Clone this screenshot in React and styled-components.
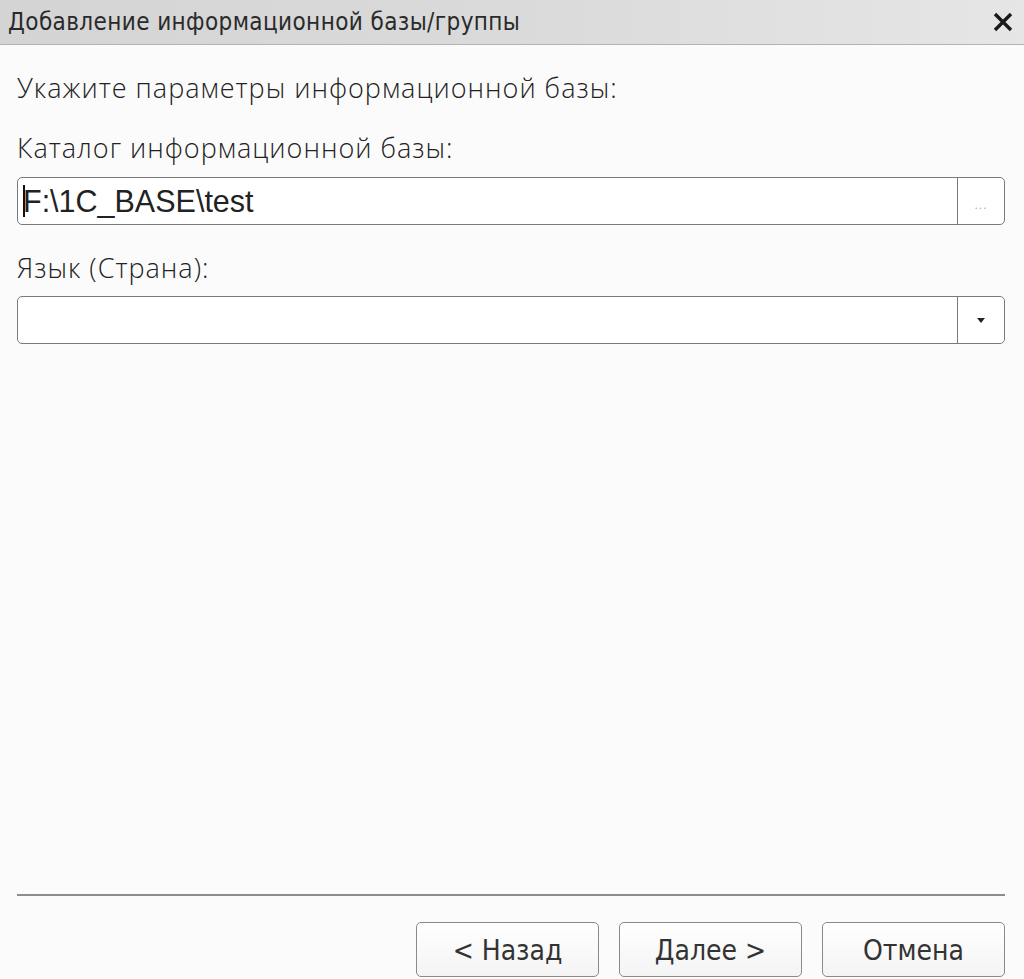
import React from 'react';
import styled, {createGlobalStyle} from 'styled-components';

const GlobalStyle = createGlobalStyle`
    html, body {
        margin: 0;
        padding: 0;
        background: #fbfbfb;
    }
`

const Dialog = styled.div`
    width: 1024px;
    height: 979px;
    display: flex;
    flex-direction: column;
    background: #fbfbfb;
    overflow: hidden;
`

const TitleBar = styled.div`
    height: 44px;
    flex: none;
    display: flex;
    align-items: center;
    justify-content: space-between;
    padding: 0 10px 0 8px;
    background: linear-gradient(to right, #d4d4d4, #dadada 50%, #e6e6e6);
    border-bottom: 1px solid #b4b4b4;
`

const Title = styled.div`
    font-family: "DejaVu Sans Condensed", sans-serif;
    font-size: 24px;
    letter-spacing: 0.4px;
    color: #2a2a2a;
`

const CloseIcon = styled.svg`
    width: 22px;
    height: 22px;
`

const Body = styled.div`
    flex: 1;
    display: flex;
    flex-direction: column;
    padding: 0 19px 0 17px;
`

const Label = styled.div`
    font-family: "Open Sans", sans-serif;
    font-weight: 300;
    font-size: 27px;
    letter-spacing: 1px;
    color: #222;
    line-height: 30px;
    margin-top: ${p => p.top}px;
`

const Field = styled.div`
    margin-top: ${p => p.top}px;
    height: 48px;
    box-sizing: border-box;
    display: flex;
    border: 1px solid #7a7a7a;
    border-radius: 5px;
    background: #fff;
`

const FieldText = styled.div`
    flex: 1;
    display: flex;
    align-items: center;
    padding-left: 5px;
    font-family: "Liberation Sans", Arial, sans-serif;
    font-size: 30.5px;
    color: #222;
`

const Caret = styled.span`
    display: inline-block;
    width: 2px;
    height: 32px;
    background: #111;
    margin-right: -2px;
`

const FieldButton = styled.div`
    width: 47px;
    flex: none;
    border-left: 1px solid #7a7a7a;
    display: flex;
    align-items: center;
    justify-content: center;
    font-family: "Liberation Sans", sans-serif;
    font-size: 12px;
    color: #aaa;
    letter-spacing: 1px;
    padding-top: 8px;
    box-sizing: border-box;
`

const Arrow = styled.div`
    width: 0;
    height: 0;
    border-left: 4px solid transparent;
    border-right: 4px solid transparent;
    border-top: 5px solid #222;
    margin-bottom: 8px;
`

const Spacer = styled.div`
    flex: 1;
`

const Separator = styled.div`
    height: 2px;
    background: #8c8c8c;
    margin-bottom: 26px;
`

const Footer = styled.div`
    display: flex;
    justify-content: flex-end;
    gap: 20px;
    margin-bottom: 2px;
`

const Button = styled.div`
    width: 183px;
    height: 55px;
    box-sizing: border-box;
    border: 1px solid #8a8a8a;
    border-radius: 5px;
    background: linear-gradient(to bottom, #ffffff, #f4f4f4);
    display: flex;
    align-items: center;
    justify-content: center;
    padding-top: 2px;
    font-family: "DejaVu Sans Condensed", sans-serif;
    font-size: 28px;
    color: #333;
`

export default function App() {
    return (
        <Dialog>
            <GlobalStyle />
            <TitleBar>
                <Title>Добавление информационной базы/группы</Title>
                <CloseIcon viewBox="0 0 22 22">
                    <path d="M3 3 L19 19 M19 3 L3 19" stroke="#1a1a1a" strokeWidth="3.4" />
                </CloseIcon>
            </TitleBar>
            <Body>
                <Label top={28}>Укажите параметры информационной базы:</Label>
                <Label top={30}>Каталог информационной базы:</Label>
                <Field top={14}>
                    <FieldText><Caret />F:\1C_BASE\test</FieldText>
                    <FieldButton>...</FieldButton>
                </Field>
                <Label top={28}>Язык (Страна):</Label>
                <Field top={13}>
                    <FieldText />
                    <FieldButton><Arrow /></FieldButton>
                </Field>
                <Spacer />
                <Separator />
                <Footer>
                    <Button>&lt; Назад</Button>
                    <Button>Далее &gt;</Button>
                    <Button>Отмена</Button>
                </Footer>
            </Body>
        </Dialog>
    );
}
